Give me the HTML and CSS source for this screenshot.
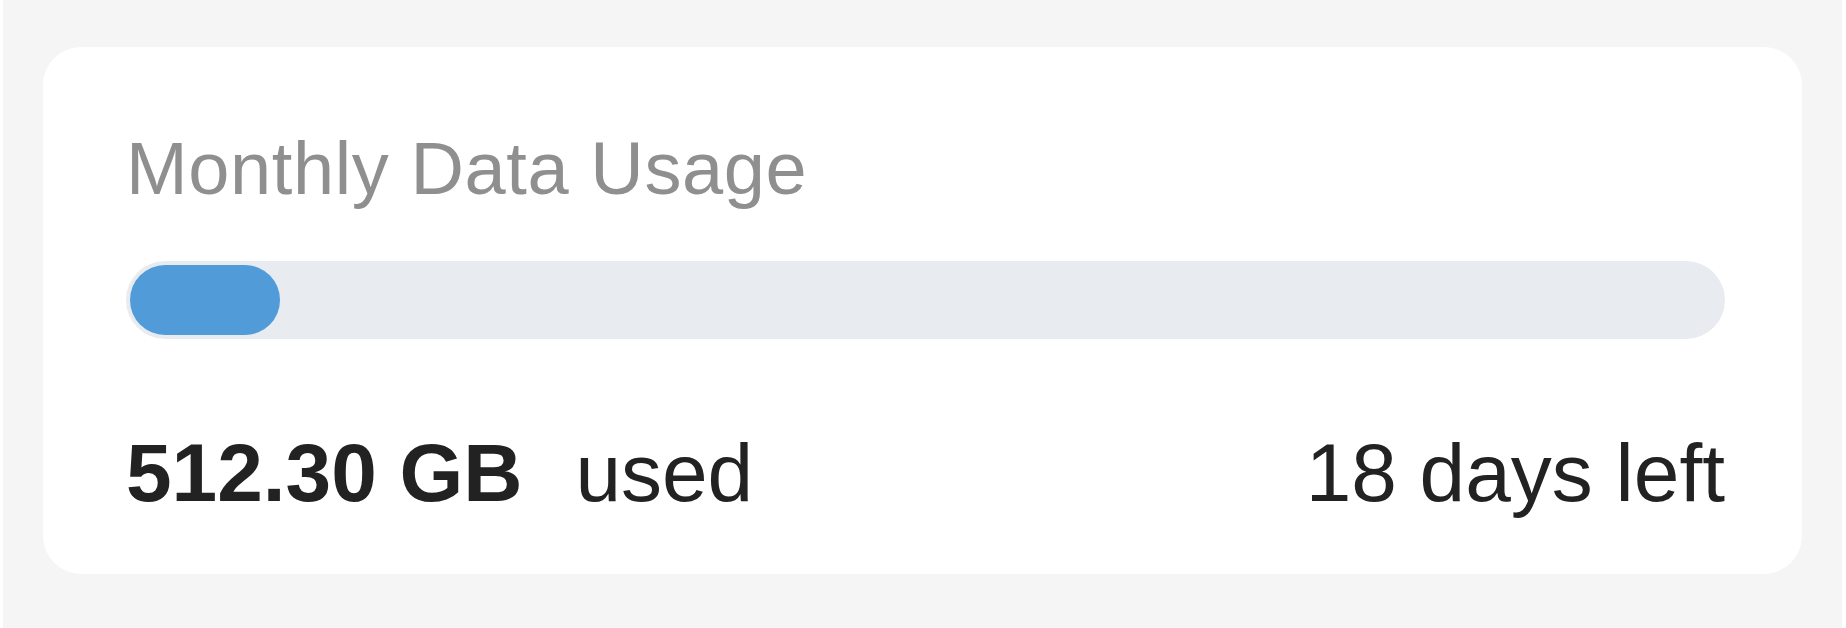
FILE: index.html
```html
<!DOCTYPE html>
<html lang="en">
<head>
  <meta charset="UTF-8">
  <meta name="viewport" content="width=device-width, initial-scale=1.0">
  <title>Monthly Data Usage</title>
  <link rel="stylesheet" href="styles.css">
</head>
<body>
  <div class="screen">
    <div class="usage-card">
      <h2 class="usage-title">Monthly Data Usage</h2>
      <div class="usage-track">
        <div class="usage-fill" style="width: 9.4%"></div>
      </div>
      <div class="usage-footer">
        <div class="usage-amount">
          <span class="usage-value">512.30 GB</span>
          <span class="usage-label">used</span>
        </div>
        <span class="usage-left">18 days left</span>
      </div>
    </div>
  </div>
</body>
</html>
```

FILE: styles.css
```css
html, body {
  margin: 0;
  padding: 0;
  background: #ffffff;
  font-family: "Liberation Sans", Arial, sans-serif;
}

.screen {
  margin: 0 4px 0 3px;
  height: 628px;
  background-color: #f5f5f5;
  padding: 47px 40px 0 40px;
  box-sizing: border-box;
}

.usage-card {
  background-color: #ffffff;
  border-radius: 38px;
  height: 527px;
  box-sizing: border-box;
  padding: 80px 77px 0 83px;
}

.usage-title {
  margin: 0;
  font-size: 74px;
  font-weight: normal;
  letter-spacing: 0.6px;
  color: #8f8f8f;
  line-height: 84px;
}

.usage-track {
  margin-top: 50px;
  height: 78px;
  padding: 4px;
  box-sizing: border-box;
  border-radius: 39px;
  background-color: #e8ebf0;
}

.usage-fill {
  height: 100%;
  border-radius: 35px;
  background-color: #519bd9;
}

.usage-footer {
  margin-top: 87px;
  display: flex;
  justify-content: space-between;
  align-items: baseline;
  font-size: 82px;
  line-height: 94px;
  color: #222222;
}

.usage-value {
  font-weight: bold;
  margin-right: 30px;
}
```
